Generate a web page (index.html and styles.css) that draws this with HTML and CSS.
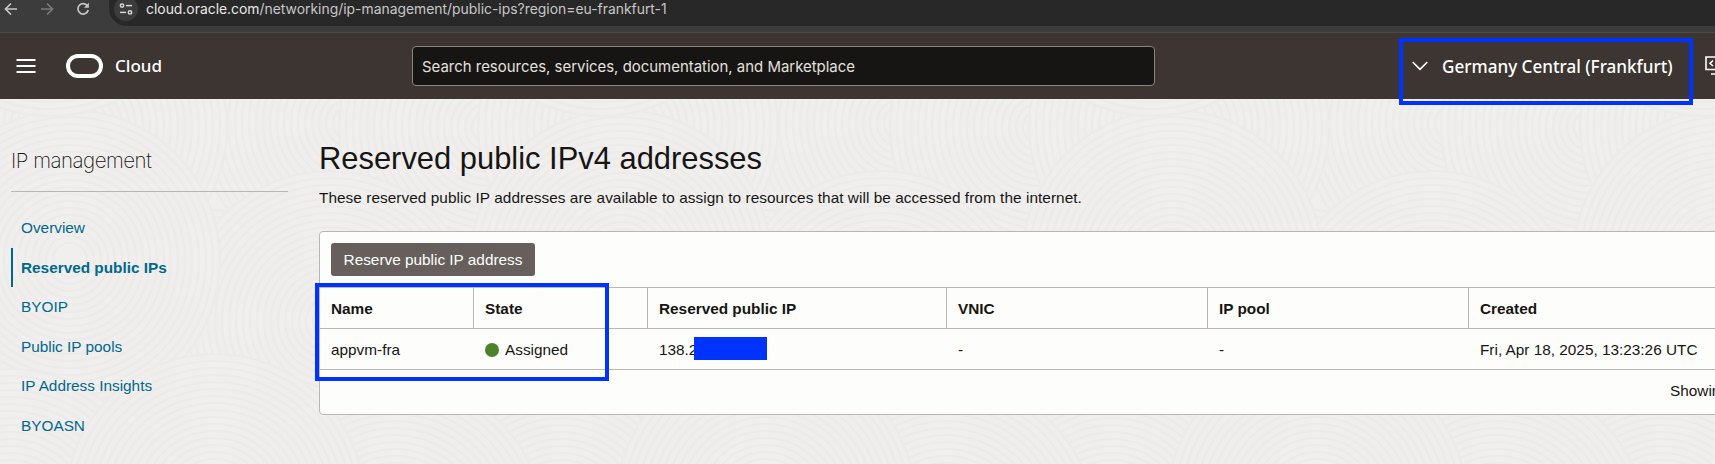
FILE: index.html
```
<!DOCTYPE html>
<html lang="en">
<head>
<meta charset="UTF-8" />
<meta name="viewport" content="width=device-width, initial-scale=1" />
<title>Reserved public IPs</title>
<link rel="stylesheet" href="styles.css">
</head>
<body>

<!-- Browser toolbar -->
<div class="browser-bar">
  <svg class="nav-icons" width="100" height="32" viewBox="0 0 100 32" fill="none" stroke-width="1.7">
    <path d="M17 9H6M11 3.5L5.5 9L11 14.5" stroke="#c7c7c7" />
    <path d="M41 9H52M47 3.5L52.5 9L47 14.5" stroke="#7a7a7a" />
    <path d="M87.6 6.2A5.2 5.2 0 1 0 88.2 10" stroke="#c7c7c7" />
    <path d="M88.9 2.8V7.7H84z" fill="#c7c7c7" />
  </svg>
  <div class="address">
    <svg class="site-icon" width="24" height="24" viewBox="0 0 24 24" fill="none" stroke="#d6d6d6" stroke-width="1.5">
      <circle cx="12" cy="12" r="12" fill="#3c3c3c" stroke="none" />
      <circle cx="8" cy="8.6" r="1.7" /><path d="M12 8.6h6" />
      <circle cx="16" cy="15.4" r="1.7" /><path d="M6 15.4h6" />
    </svg>
    <span class="url"><b>cloud.oracle.com</b>/networking/ip-management/public-ips?region=eu-frankfurt-1</span>
  </div>
</div>

<header>
  <svg class="menu-icon" width="20" height="16" viewBox="0 0 20 16" stroke="#fff" stroke-width="1.8">
    <path d="M0.5 2h19M0.5 8h19M0.5 14h19" />
  </svg>
  <div class="logo"></div>
  <span class="brand">Cloud</span>
  <div class="search">Search resources, services, documentation, and Marketplace</div>
  <div class="region">
    <svg width="16" height="10" viewBox="0 0 16 10" fill="none" stroke="#fff" stroke-width="1.7"><path d="M0.7 1L8 8.3L15.3 1" /></svg>
    <span>Germany Central (Frankfurt)</span>
  </div>
  <svg class="tools-icon" width="24" height="20" viewBox="0 0 24 20" fill="none" stroke="#fff" stroke-width="1.6">
    <path d="M1 1H23V13.5H1zM6 18H18M12 14v4M8 4.5L5 7.3L8 10M16 4.5L19 7.3L16 10" />
  </svg>
</header>

<div class="page">
  <svg class="texture" width="100%" height="100%">
    <defs>
      <!-- one ripple, reused at several places in the tile -->
      <g id="ripple" fill="none" stroke="#ecebe9" stroke-width="2.2">
        <circle r="150" fill="#f0efee" /><circle r="143" /><circle r="136" /><circle r="129" />
        <circle r="122" /><circle r="115" /><circle r="108" /><circle r="101" /><circle r="94" />
        <circle r="87" /><circle r="80" /><circle r="73" /><circle r="66" />
        <circle r="59" /><circle r="52" /><circle r="45" /><circle r="38" />
        <circle r="31" /><circle r="24" /><circle r="17" />
      </g>
      <pattern id="ripples" width="551" height="400" patternUnits="userSpaceOnUse">
        <rect width="551" height="400" fill="#f0efee" />
        <use href="#ripple" x="430" y="275" /><use href="#ripple" x="-121" y="275" />
        <use href="#ripple" x="200" y="260" />
        <use href="#ripple" x="350" y="24" /><use href="#ripple" x="489" y="28" />
        <use href="#ripple" x="-62" y="28" />
        <use href="#ripple" x="77" y="28" /><use href="#ripple" x="628" y="28" />
        <use href="#ripple" x="330" y="222" />
        <use href="#ripple" x="70" y="161" /><use href="#ripple" x="621" y="161" />
        <use href="#ripple" x="10" y="420" /><use href="#ripple" x="561" y="420" />
        <use href="#ripple" x="395" y="430" />
        <use href="#ripple" x="215" y="405" />
        <use href="#ripple" x="50" y="-133" /><use href="#ripple" x="601" y="-133" />
      </pattern>
    </defs>
    <rect width="100%" height="100%" fill="url(#ripples)" />
  </svg>

  <aside>
    <h2>IP management</h2>
    <nav>
      <a>Overview</a>
      <a class="active">Reserved public IPs</a>
      <a>BYOIP</a>
      <a>Public IP pools</a>
      <a>IP Address Insights</a>
      <a>BYOASN</a>
    </nav>
  </aside>

  <main>
    <h1>Reserved public IPv4 addresses</h1>
    <p class="intro">These reserved public IP addresses are available to assign to resources that will be accessed from the internet.</p>
    <div class="panel">
      <div class="toolbar"><button>Reserve public IP address</button></div>
      <div class="row head">
        <div>Name</div><div>State</div><div>Reserved public IP</div><div>VNIC</div><div>IP pool</div><div>Created</div>
      </div>
      <div class="row">
        <div>appvm-fra</div>
        <div><i class="dot"></i>Assigned</div>
        <div>138.2<span class="redacted"></span></div>
        <div>-</div>
        <div>-</div>
        <div>Fri, Apr 18, 2025, 13:23:26 UTC</div>
      </div>
      <div class="footer">Showing 1 item</div>
    </div>
  </main>
</div>

<!-- Highlights -->
<div class="mark mark-region"></div>
<div class="mark mark-state"></div>

</body>
</html>
```
FILE: styles.css
```
* {
  box-sizing: border-box;
  margin: 0; padding: 0;
}
body {
  width: 1715px;
  height: 464px;
  overflow: hidden;
  position: relative;
  font-family: "Liberation Sans", Arial, sans-serif;
  font-size: 15.35px;
  color: #161513;
}

.browser-bar {
  height: 33px;
  background: #3c3c3c;
  border-bottom: 1px solid #4a4b49;
  display: flex;
}
.nav-icons { margin-right: 9px; }
.address {
  flex: 1;
  height: 26px;
  background: #282828;
  border-bottom-left-radius: 18px;
  display: flex;
  padding-left: 5px;
}
.site-icon { margin-top: -3px; }
.url {
  margin-left: 8px;
  font: 13.9px/19px Inter, sans-serif;
  color: #c7c7c7;
  white-space: nowrap;
}
.url b {
  font-weight: 400;
  color: #e8e8e8;
}

header {
  height: 66px;
  background: #3c3531;
  color: #fff;
  display: flex;
  align-items: center;
  padding-left: 16px;
}
.menu-icon, .logo, .brand, .region, .tools-icon { flex: none; }
.logo {
  width: 37px;
  height: 24px;
  margin-left: 30px;
  border: 4px solid #fff;
  border-radius: 12px;
}
.brand {
  width: 297px;
  margin-left: 12px;
  padding-bottom: 1px;
  font: 500 17px "Noto Sans", sans-serif;
}
.search {
  width: 743px;
  height: 40px;
  flex: none;
  border: 1px solid #8b8580;
  border-radius: 4px;
  background: #161513;
  color: #e3e1df;
  font: 14.95px/40px Inter, sans-serif;
  padding-left: 9px;
}
.region {
  width: 293px;
  margin-left: 257px;
  display: flex;
  align-items: center;
  gap: 14px;
  font: 500 17.1px "Noto Sans", sans-serif;
  white-space: nowrap;
}

.page {
  height: 365px;
  position: relative;
  display: flex;
}
.texture {
  position: absolute;
  inset: 0;
  z-index: -1;
}
aside {
  width: 277px;
  margin-left: 11px;
  padding-top: 43px;
  flex: none;
}
h2 {
  height: 50px;
  border-bottom: 1px solid #bcb6b1;
  font: 200 20.5px/38px Inter, sans-serif;
  letter-spacing: -0.5px;
}
nav {
  padding-top: 16px;
}
nav a {
  display: block;
  height: 39.6px;
  line-height: 39.6px;
  padding-left: 10px;
  color: #00688c;
}
nav .active {
  padding-left: 8px;
  border-left: 2px solid #00688c;
  font-weight: 700;
}

main {
  margin-left: 31px;
  padding-top: 39px;
  flex: 1;
  min-width: 0;
  overflow: hidden;
}
h1 {
  font-size: 30.9px;
  font-weight: 400;
  line-height: 42px;
}
.intro {
  margin-top: 8px;
  line-height: 20px;
  height: 43px;
  letter-spacing: 0.06px;
}
.panel {
  width: 1500px;
  height: 184px;
  background: #fdfdfb;
  border: 1px solid #bcb6b1;
  border-radius: 4px;
}
.toolbar {
  height: 55px;
  padding: 11px;
}
.toolbar button {
  width: 204px;
  height: 33px;
  border: none;
  border-radius: 3px;
  background: #665f5b;
  color: #fff;
  font: inherit;
}
.row {
  display: grid;
  grid-template-columns: 153px 174px 299px 261px 261px 1fr;
  height: 41px;
  border-top: 1px solid #bcb6b1;
  line-height: 41px;
}
.row > div {
  padding-left: 12px;
  display: flex;
  align-items: center;
  white-space: nowrap;
}
.row > div:first-child { padding-left: 11px; }
.head {
  font-weight: 700;
}
.head > div + div {
  border-left: 1px solid #bcb6b1;
  padding-left: 11px;
}
.dot {
  width: 14px;
  height: 14px;
  margin-right: 6px;
  border-radius: 50%;
  background: #4a832a;
}
.redacted {
  width: 73px;
  height: 23px;
  margin: -2px 0 0 -3px;
  background: #0033ff;
}
.footer {
  border-top: 1px solid #bcb6b1;
  height: 45px;
  line-height: 41px;
  padding-left: 1350px;
}

.mark {
  position: absolute;
  border: 4px solid #0033ff;
}
.mark-region {
  left: 1399px;
  top: 38px;
  width: 294px;
  height: 67px;
}
.mark-state {
  left: 315px;
  top: 283px;
  width: 294px;
  height: 98px;
}
```
